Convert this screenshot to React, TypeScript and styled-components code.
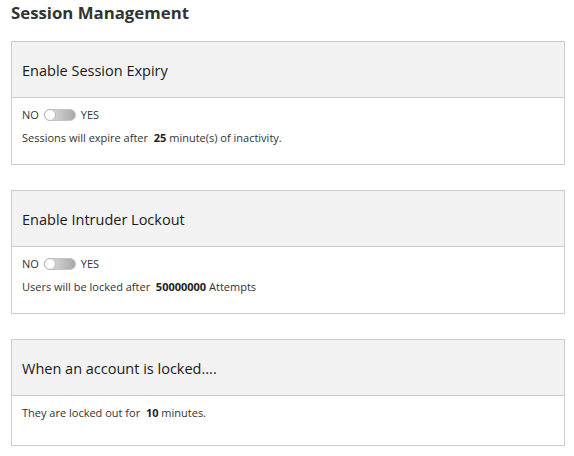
import styled, { createGlobalStyle } from "styled-components";

const GlobalStyle = createGlobalStyle`
  body {
    margin: 0;
    background: #ffffff;
    font-family: "Open Sans", "Liberation Sans", sans-serif;
    color: #333333;
  }
`;

const Page = styled.div`
  padding: 0 9px 0 11px;
`;

const PageTitle = styled.h2`
  margin: 2px 0 17px;
  font-size: 16.8px;
  line-height: 22px;
  font-weight: 700;
  color: #333333;
`;

const Card = styled.section`
  border: 1px solid #cccccc;
  margin-bottom: 25px;
`;

const CardHeader = styled.div`
  display: flex;
  align-items: center;
  height: 56px;
  box-sizing: border-box;
  padding: 2px 10px 0;
  background: #f2f2f2;
  border-bottom: 1px solid #cccccc;
  font-size: 14.5px;
  color: #1a1a1a;
`;

const CardBody = styled.div<{ $bottom: number }>`
  display: flex;
  flex-direction: column;
  gap: 9px;
  padding: 10px 10px ${({ $bottom }) => $bottom}px;
  font-size: 11px;
  line-height: 14px;
`;

const ToggleRow = styled.div`
  display: flex;
  align-items: center;
  gap: 5px;
`;

const Track = styled.span`
  position: relative;
  display: inline-block;
  width: 30px;
  height: 10px;
  border-radius: 6px;
  background: linear-gradient(to right, #e4e4e4, #a9a9a9);
  border: 1px solid #c4c4c4;
`;

const Knob = styled.span`
  position: absolute;
  left: -1px;
  top: -1px;
  width: 10px;
  height: 10px;
  border-radius: 50%;
  background: #ffffff;
  border: 1px solid #b5b5b5;
`;

const Line = styled.p`
  margin: 0;
  white-space: pre;
`;

const Value = styled.b`
  font-weight: 700;
  color: #222222;
`;

function Toggle() {
  return (
    <ToggleRow>
      <span>NO</span>
      <Track>
        <Knob />
      </Track>
      <span>YES</span>
    </ToggleRow>
  );
}

export default function App() {
  return (
    <Page>
      <GlobalStyle />
      <PageTitle>Session Management</PageTitle>

      <Card>
        <CardHeader>Enable Session Expiry</CardHeader>
        <CardBody $bottom={19}>
          <Toggle />
          <Line>
            Sessions will expire after  <Value>25</Value> minute(s) of inactivity.
          </Line>
        </CardBody>
      </Card>

      <Card>
        <CardHeader>Enable Intruder Lockout</CardHeader>
        <CardBody $bottom={19}>
          <Toggle />
          <Line>
            Users will be locked after  <Value>50000000</Value> Attempts
          </Line>
        </CardBody>
      </Card>

      <Card>
        <CardHeader>When an account is locked....</CardHeader>
        <CardBody $bottom={25}>
          <Line>
            They are locked out for  <Value>10</Value> minutes.
          </Line>
        </CardBody>
      </Card>
    </Page>
  );
}
